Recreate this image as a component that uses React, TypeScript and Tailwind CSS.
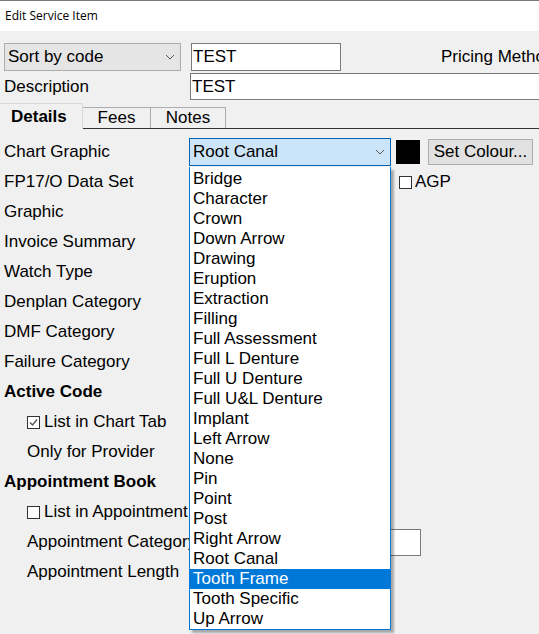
import React from 'react'

const GRAPHICS = [
  'Bridge',
  'Character',
  'Crown',
  'Down Arrow',
  'Drawing',
  'Eruption',
  'Extraction',
  'Filling',
  'Full Assessment',
  'Full L Denture',
  'Full U Denture',
  'Full U&L Denture',
  'Implant',
  'Left Arrow',
  'None',
  'Pin',
  'Point',
  'Post',
  'Right Arrow',
  'Root Canal',
  'Tooth Frame',
  'Tooth Specific',
  'Up Arrow',
]

function Chevron() {
  return (
    <svg width="10" height="6" viewBox="0 0 10 6" className="shrink-0">
      <polyline points="1,1 5,5 9,1" fill="none" stroke="#555" strokeWidth="1" />
    </svg>
  )
}

function CheckBox({ checked }: { checked?: boolean }) {
  return (
    <span className="w-[13px] h-[13px] border border-[#333] bg-white shrink-0 flex items-center justify-center">
      {checked && (
        <svg width="11" height="11" viewBox="0 0 11 11">
          <polyline points="2,5.5 4.5,8 9,2.5" fill="none" stroke="#555" strokeWidth="1.3" />
        </svg>
      )}
    </span>
  )
}

function Row({ children }: { children: React.ReactNode }) {
  return <div className="h-[30px] flex items-center whitespace-nowrap">{children}</div>
}

export default function App() {
  return (
    <div className="relative w-[539px] h-[634px] overflow-hidden bg-[#f0f0f0] text-[17px] text-black font-['Liberation_Sans',Arial,sans-serif] border-t border-[#7a7a7a]">
      <div className="h-[30px] bg-white flex items-center pl-[5px] text-[12px] font-['Open_Sans','Noto_Sans',sans-serif]">
        Edit Service Item
      </div>

      {/* header fields */}
      <div className="mt-[12px] flex items-center h-[28px] whitespace-nowrap">
        <div className="ml-[4px] w-[177px] h-[28px] shrink-0 bg-[#e5e5e5] border border-[#adadad] flex items-center justify-between pl-[3px] pr-[5px]">
          <span>Sort by code</span>
          <Chevron />
        </div>
        <div className="ml-[10px] w-[150px] h-[28px] shrink-0 bg-white border border-[#7a7a7a] flex items-center pl-[1px]">
          TEST
        </div>
        <span className="ml-[100px] shrink-0">Pricing Method</span>
      </div>
      <div className="mt-[2px] flex items-center h-[27px]">
        <span className="ml-[4px] w-[186px] shrink-0">Description</span>
        <div className="flex-1 h-[27px] bg-white border border-[#7a7a7a] border-r-0 flex items-center pl-[1px]">
          TEST
        </div>
      </div>

      {/* tabs */}
      <div className="mt-[3px] flex items-end h-[26px] border-b border-[#333]">
        <div className="w-[83px] h-[26px] -mb-px bg-[#f0f0f0] border-t border-r border-[#d9d9d9] flex items-center pl-[11px] font-bold z-10">
          Details
        </div>
        <div className="w-[68px] h-[21px] border border-b-0 border-l-0 border-[#adadad] flex items-center justify-center">
          Fees
        </div>
        <div className="w-[75px] h-[21px] border border-b-0 border-l-0 border-[#adadad] flex items-center justify-center">
          Notes
        </div>
      </div>

      {/* details content */}
      <div className="pt-[8px] pl-[4px]">
        <Row>
          <span className="w-[185px] shrink-0">Chart Graphic</span>
          <div className="w-[202px] h-[28px] shrink-0 bg-[#cce4f7] border border-[#0063b1] flex items-center justify-between pl-[3px] pr-[5px]">
            <span>Root Canal</span>
            <Chevron />
          </div>
          <span className="ml-[5px] w-[24px] h-[24px] shrink-0 bg-black" />
          <div className="ml-[8px] w-[105px] h-[26px] shrink-0 bg-[#e1e1e1] border border-[#adadad] flex items-center justify-center">
            Set Colour...
          </div>
        </Row>
        <Row>
          <span className="w-[395px] shrink-0">FP17/O Data Set</span>
          <CheckBox />
          <span className="ml-[3px]">AGP</span>
        </Row>
        <Row>Graphic</Row>
        <Row>Invoice Summary</Row>
        <Row>Watch Type</Row>
        <Row>Denplan Category</Row>
        <Row>DMF Category</Row>
        <Row>Failure Category</Row>
        <Row>
          <span className="font-bold">Active Code</span>
        </Row>
        <Row>
          <span className="ml-[23px] flex items-center gap-[4px]">
            <CheckBox checked />
            List in Chart Tab
          </span>
        </Row>
        <Row>
          <span className="ml-[23px]">Only for Provider</span>
        </Row>
        <Row>
          <span className="font-bold">Appointment Book</span>
        </Row>
        <Row>
          <span className="ml-[23px] flex items-center gap-[4px]">
            <CheckBox />
            List in Appointment Book
          </span>
        </Row>
        <Row>
          <span className="ml-[23px] w-[163px] shrink-0">Appointment Category</span>
          <div className="w-[231px] h-[27px] shrink-0 bg-white border border-[#7a7a7a]" />
        </Row>
        <Row>
          <span className="ml-[23px]">Appointment Length</span>
        </Row>
      </div>

      {/* open dropdown list */}
      <div className="absolute left-[189px] top-[166px] w-[202px] bg-white border border-t-0 border-[#0078d7] shadow-[3px_3px_2px_rgba(0,0,0,0.3)] pt-[2px]">
        {GRAPHICS.map((g) => (
          <div
            key={g}
            className={`h-[20px] flex items-center pl-[3px] whitespace-nowrap ${
              g === 'Tooth Frame' ? 'bg-[#0078d7] text-white' : ''
            }`}
          >
            {g}
          </div>
        ))}
      </div>
    </div>
  )
}
